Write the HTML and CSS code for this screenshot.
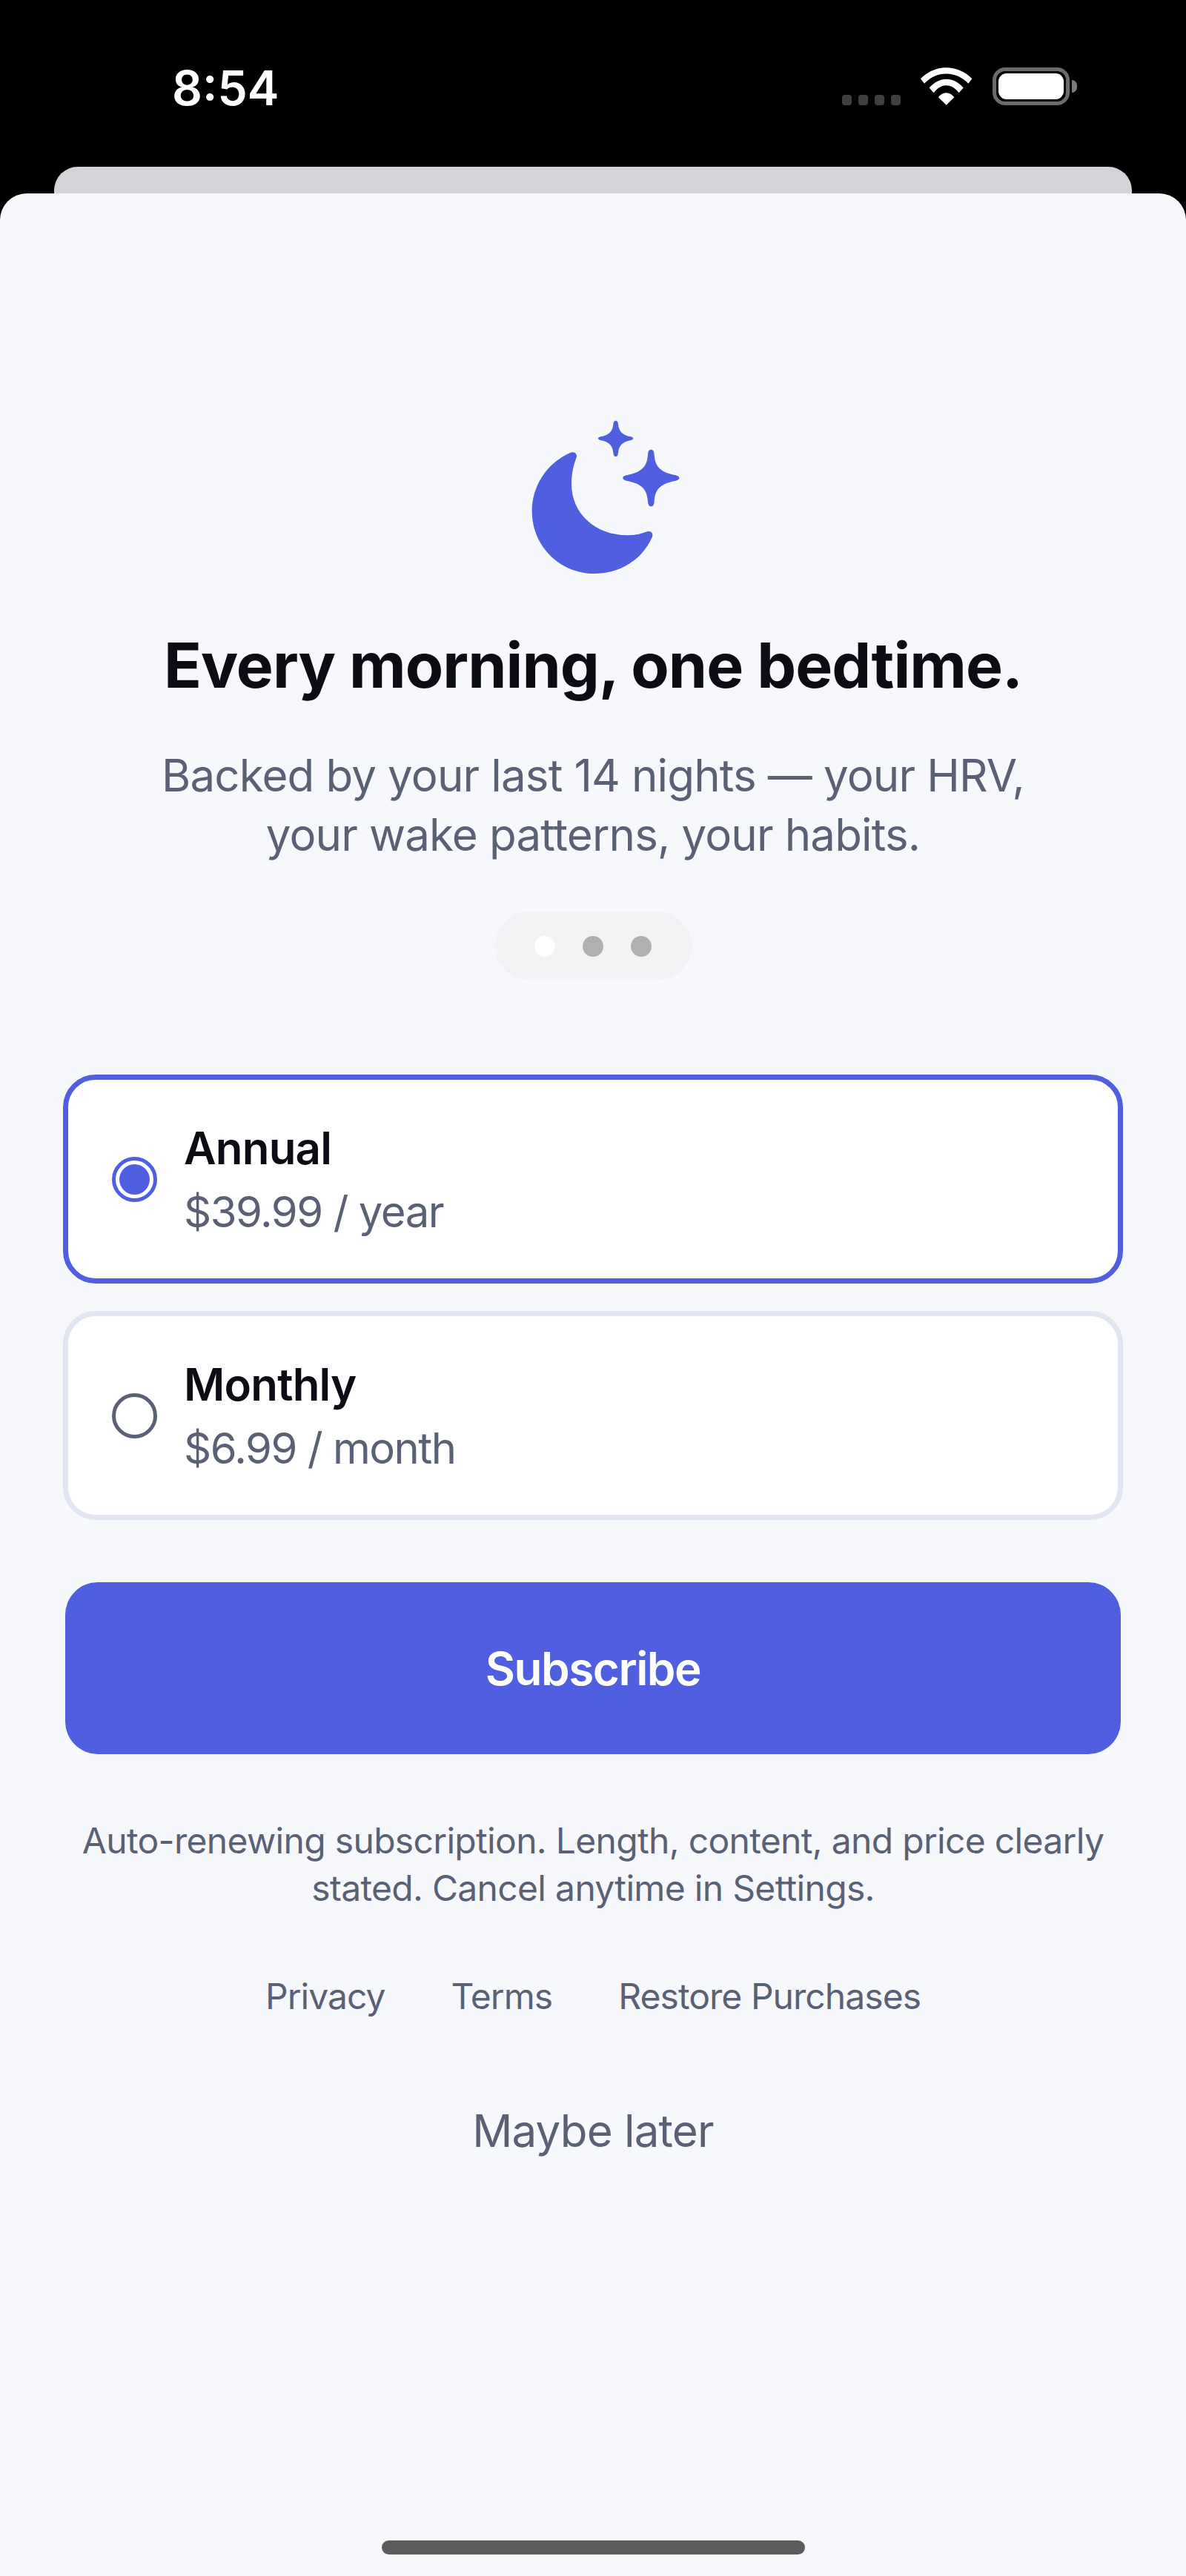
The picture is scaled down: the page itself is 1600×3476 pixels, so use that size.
FILE: index.html
```html
<!DOCTYPE html>
<html lang="en">
<head>
    <meta charset="UTF-8">
    <meta name="viewport" content="width=device-width, initial-scale=1.0">
    <title>Subscribe</title>
    <link rel="stylesheet" href="styles.css">
</head>
<body>
    <div class="status-bar">
        <span class="time">8:54</span>
        <div class="status-icons">
            <div class="signal"><i></i><i></i><i></i><i></i></div>
            <svg class="wifi" width="70" height="51" viewBox="0 0 210 152">
                <path fill="#fff" d="M0 45 C28 16 65 0 104 0 C143 0 180 16 208 45 L193 65 C170 40 138 25 104 25 C70 25 38 40 15 65 Z"/>
                <path fill="#fff" d="M35 82 C54 60 78 47 104 47 C130 47 154 60 173 82 L155 102 C141 84 124 72 104 72 C84 72 67 84 53 102 Z"/>
                <path fill="#fff" d="M72 120 C81 108 92 102 104 102 C116 102 127 108 136 120 L104 152 Z"/>
            </svg>
            <div class="battery"><div class="battery-level"></div></div>
            <div class="battery-nub"></div>
        </div>
    </div>
    <div class="back-card"></div>

    <main class="sheet">
        <svg class="moon" width="280" height="260" viewBox="0 0 840 780">
            <path fill="#4f5fe0" d="M330 212 C345 206 358 218 353 232 C340 265 333 300 333 340 C333 455 425 547 560 547 C590 547 615 541 640 532 C655 527 666 540 659 555 C620 645 530 702 425 702 C285 702 173 590 173 450 C173 340 240 250 330 212 Z"/>
            <path fill="#4f5fe0" d="M512 83 C519 83 521 90 522 98 C525 125 537 141 574 148 C586 151 586 159 574 162 C537 169 525 185 522 212 C521 222 519 228 512 228 C505 228 503 222 502 212 C499 185 487 169 450 162 C438 159 438 151 450 148 C487 141 499 125 502 98 C503 90 505 83 512 83 Z"/>
            <path fill="#4f5fe0" d="M655 200 C664 200 667 208 668 220 C671 268 690 292 755 304 C774 308 774 322 755 326 C690 338 671 362 668 410 C667 422 664 430 655 430 C646 430 643 422 642 410 C639 362 620 338 555 326 C536 322 536 308 555 304 C620 292 639 268 642 220 C643 208 646 200 655 200 Z"/>
        </svg>
        <h1 class="title">Every morning, one bedtime.</h1>
        <p class="subtitle">Backed by your last 14 nights — your HRV,<br>your wake patterns, your habits.</p>
        <div class="pager">
            <span class="dot active"></span>
            <span class="dot"></span>
            <span class="dot"></span>
        </div>

        <div class="plans">
            <div class="plan selected">
                <span class="radio"></span>
                <div class="plan-text">
                    <div class="plan-name">Annual</div>
                    <div class="plan-price">$39.99 / year</div>
                </div>
            </div>
            <div class="plan">
                <span class="radio"></span>
                <div class="plan-text">
                    <div class="plan-name">Monthly</div>
                    <div class="plan-price">$6.99 / month</div>
                </div>
            </div>
        </div>

        <button class="subscribe">Subscribe</button>

        <p class="legal">Auto-renewing subscription. Length, content, and price clearly<br>stated. Cancel anytime in Settings.</p>
        <div class="links">
            <a>Privacy</a>
            <a>Terms</a>
            <a>Restore Purchases</a>
        </div>
        <a class="later">Maybe later</a>

        <div class="home-indicator"></div>
    </main>
</body>
</html>
```

FILE: styles.css
```css
* {
    box-sizing: border-box;
}
body {
    font-family: Inter, "Liberation Sans", sans-serif;
    margin: 0;
    width: 1600px;
    height: 3476px;
    overflow: hidden;
    background-color: #000;
}
.status-bar {
    height: 225px;
    padding: 91px 147px 0 232px;
    display: flex;
    justify-content: space-between;
    align-items: flex-start;
}
.time {
    color: #fff;
    font-size: 64px;
    font-weight: 600;
    line-height: 56px;
}
.status-icons {
    display: flex;
    align-items: flex-start;
}
.signal {
    display: flex;
    gap: 9px;
    margin-top: 37px;
    margin-right: 27px;
}
.signal i {
    width: 13px;
    height: 14px;
    border-radius: 4px;
    background-color: #3f3f3f;
}
.wifi {
    margin-right: 27px;
}
.battery {
    width: 104px;
    height: 51px;
    padding: 3px;
    border: 5px solid #6b6b6b;
    border-radius: 17px;
}
.battery-level {
    width: 100%;
    height: 100%;
    background-color: #fff;
    border-radius: 11px;
}
.battery-nub {
    width: 7px;
    height: 17px;
    margin: 17px 0 0 3px;
    background-color: #7b7b7b;
    border-radius: 0 8px 8px 0;
}
.back-card {
    height: 36px;
    margin: 0 73px;
    background-color: #d4d4d8;
    border-radius: 32px 32px 0 0;
}
.sheet {
    height: 3215px;
    padding: 279px 85px 0;
    background-color: #f7f8fc;
    border-radius: 36px 36px 0 0;
    display: flex;
    flex-direction: column;
    align-items: center;
}
.title {
    margin: 48px 0 0;
    color: #0b0c14;
    font-size: 84px;
    font-weight: 700;
    line-height: 100px;
    letter-spacing: -0.95px;
}
.subtitle {
    margin: 58px 0 0;
    color: #5b6175;
    font-size: 60px;
    line-height: 80px;
    letter-spacing: -0.85px;
    text-align: center;
}
.pager {
    width: 265px;
    height: 93px;
    margin-top: 64px;
    background-color: #f2f3f5;
    border-radius: 47px;
    display: flex;
    align-items: center;
    justify-content: center;
    gap: 37px;
}
.dot {
    width: 28px;
    height: 28px;
    border-radius: 50%;
    background-color: #b0b0b0;
}
.dot.active {
    background-color: #fff;
}
.plans {
    width: 100%;
    margin-top: 127px;
    display: flex;
    flex-direction: column;
    gap: 37px;
}
.plan {
    height: 282px;
    padding: 0 59px;
    background-color: #fff;
    border: 7px solid #e3e6f0;
    border-radius: 44px;
    display: flex;
    align-items: center;
    gap: 36px;
}
.plan.selected {
    border-color: #4f5fe0;
}
.radio {
    width: 61px;
    height: 61px;
    padding: 5px;
    border: 5px solid #5b6175;
    border-radius: 50%;
    background-clip: content-box;
}
.selected .radio {
    border-color: #4f5fe0;
    background-color: #4f5fe0;
}
.plan-text {
    padding-top: 2px;
}
.plan-name {
    color: #0b0c14;
    font-size: 60px;
    font-weight: 600;
    line-height: 86px;
    letter-spacing: -0.8px;
}
.plan-price {
    color: #5b6175;
    font-size: 58px;
    line-height: 86px;
    letter-spacing: -1.5px;
}
.subscribe {
    width: 1424px;
    height: 232px;
    margin-top: 84px;
    border: none;
    border-radius: 44px;
    background-color: #4f5fe0;
    color: #fff;
    font-family: inherit;
    font-size: 62px;
    font-weight: 600;
    letter-spacing: -1.5px;
}
.legal {
    margin: 85px 0 0;
    color: #5b6175;
    font-size: 48px;
    line-height: 64px;
    letter-spacing: -0.68px;
    text-align: center;
    white-space: nowrap;
}
.links {
    margin-top: 82px;
    display: flex;
    gap: 89px;
    color: #5b6175;
    font-size: 48px;
    line-height: 64px;
    letter-spacing: -0.95px;
}
.later {
    margin-top: 109px;
    color: #5b6175;
    font-size: 60px;
    line-height: 80px;
    letter-spacing: -0.8px;
}
.home-indicator {
    width: 571px;
    height: 19px;
    margin-top: auto;
    margin-bottom: 29px;
    border-radius: 10px;
    background-color: #5c5c5c;
}
```
